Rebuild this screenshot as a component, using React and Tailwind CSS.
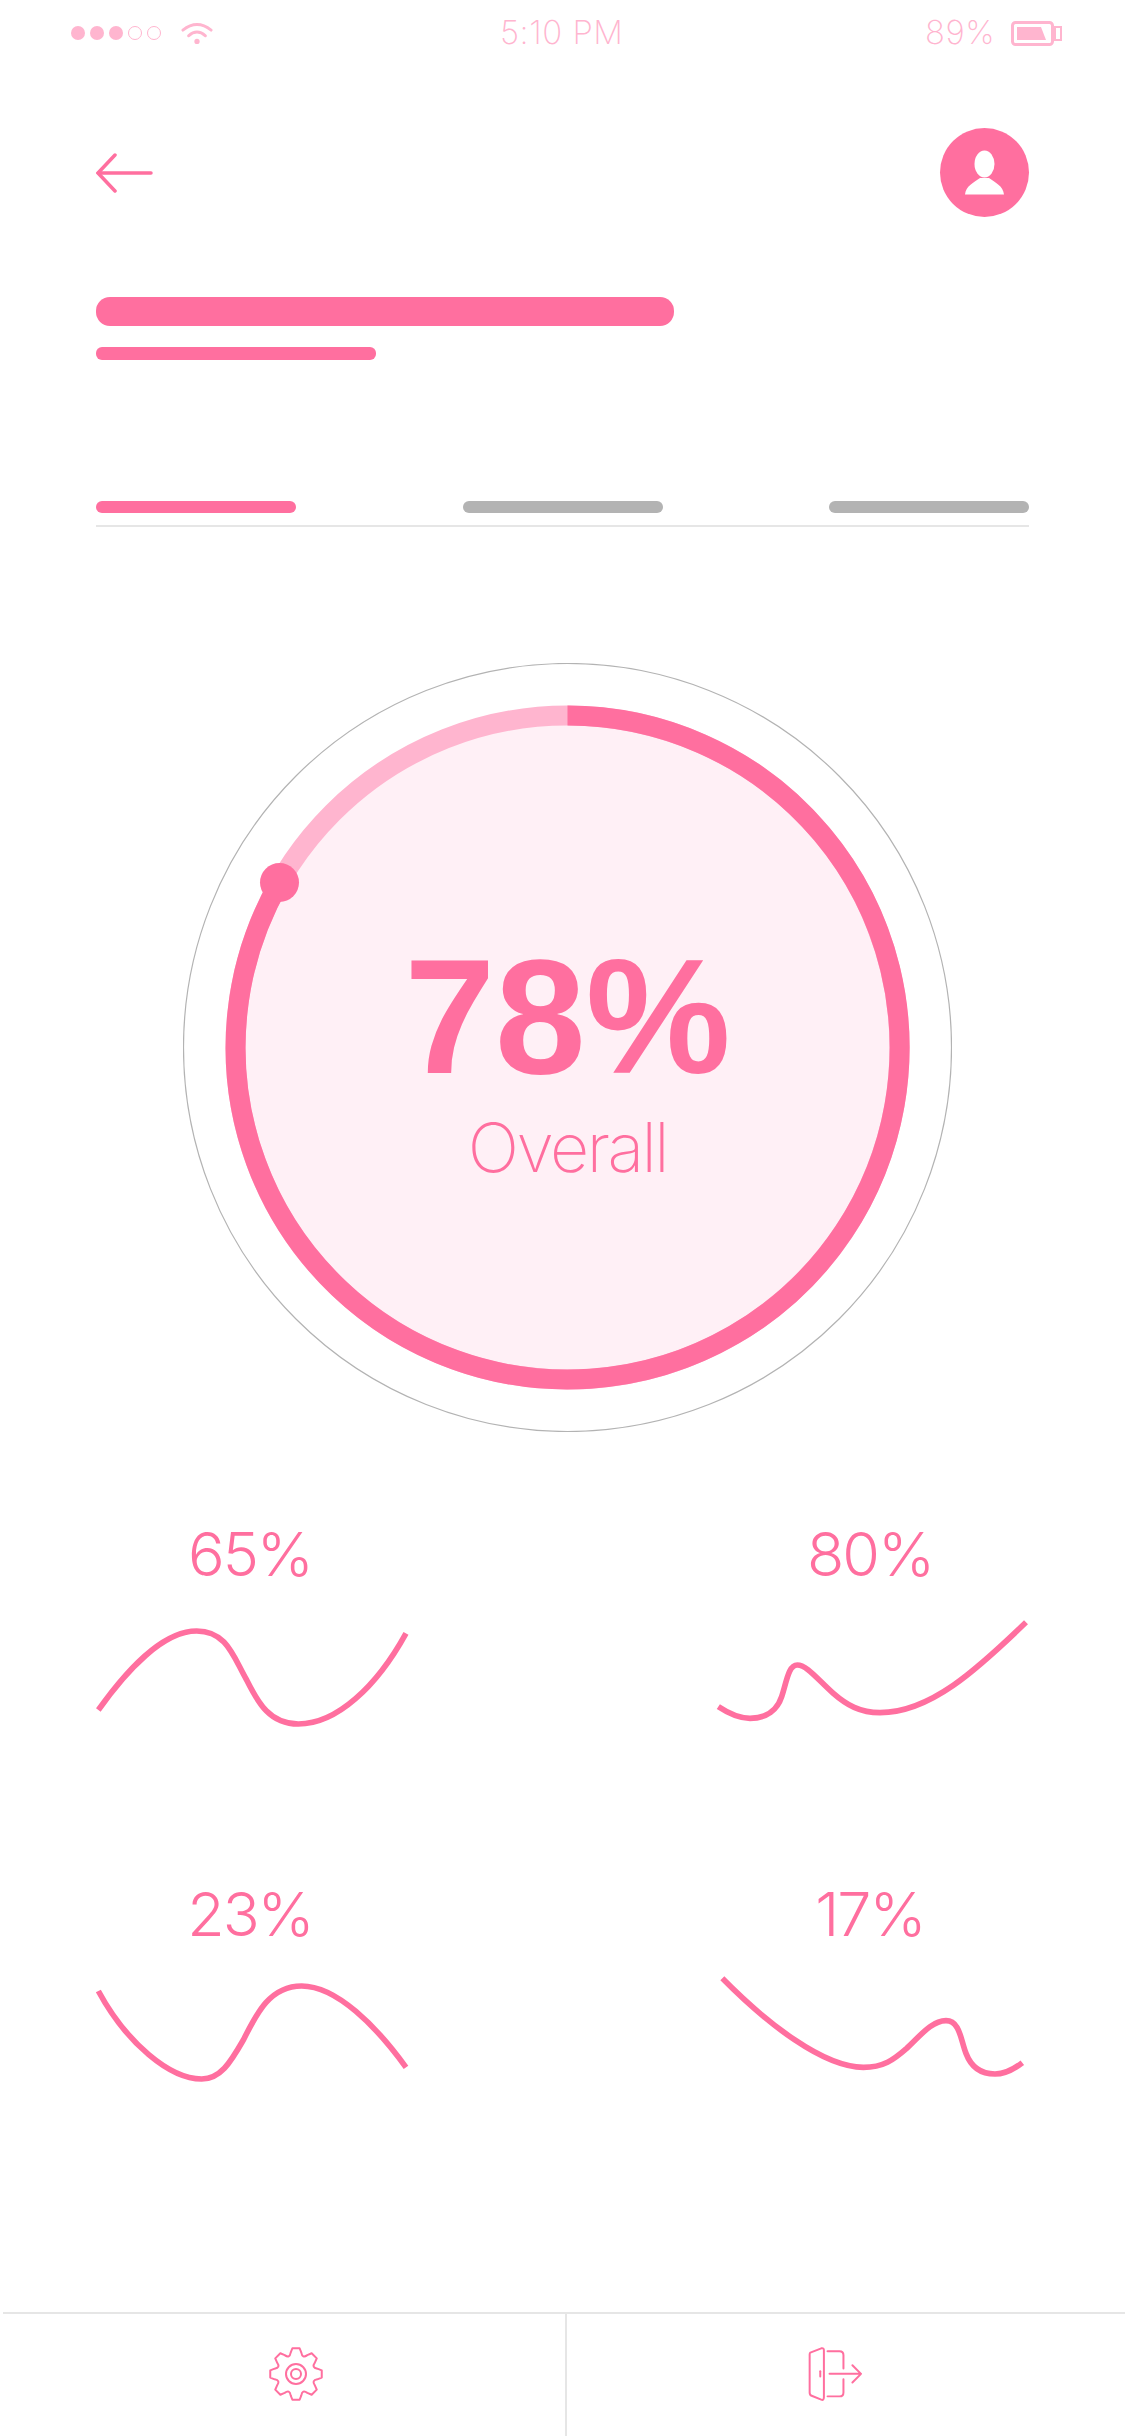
import React from "react";

const PINK = "#ff6f9f";

function gearPath() {
  const cx = 27, cy = 27, n = 8;
  const pt = (r, a) => {
    const t = (a - 90) * Math.PI / 180;
    return `${(cx + r * Math.cos(t)).toFixed(2)} ${(cy + r * Math.sin(t)).toFixed(2)}`;
  };
  let d = "";
  for (let i = 0; i < n; i++) {
    const a = (360 / n) * i;
    d += `${i === 0 ? "M" : "L"}${pt(22, a - 14)} L${pt(26, a - 8)} L${pt(26, a + 8)} L${pt(22, a + 14)} `;
    d += `Q${pt(16.5, a + 22.5)} ${pt(22, a + 31)} `;
  }
  return d + "Z";
}

function Chart({ value, d, box, h }) {
  return (
    <div className="w-[400px] flex flex-col">
      <div className="w-[360px] h-[100px] pt-[22px] text-center text-[61px] leading-[64px] font-light text-[#ff6f9f] font-['Inter',sans-serif] tracking-[-2px]">{value}</div>
      <svg viewBox={box} className="w-[400px] block" style={{ height: h }} fill="none">
        <path d={d} stroke={PINK} strokeWidth="17" />
      </svg>
    </div>
  );
}

export default function App() {
  return (
    <div className="w-[1125px] h-[2436px] bg-white flex flex-col overflow-hidden font-['Inter',sans-serif]">
      <div className="h-[66px] flex items-center pl-[71px] relative">
        <div className="flex gap-[5px] w-[110px]">
          <span className="w-[14px] h-[14px] rounded-full bg-[#ffb5cf]" />
          <span className="w-[14px] h-[14px] rounded-full bg-[#ffb5cf]" />
          <span className="w-[14px] h-[14px] rounded-full bg-[#ffb5cf]" />
          <span className="w-[14px] h-[14px] rounded-full border border-[#ffb5cf]" />
          <span className="w-[14px] h-[14px] rounded-full border border-[#ffb5cf]" />
        </div>
        <svg viewBox="0 0 34 24" className="w-[32px] h-[24px]" fill="none" stroke="#ffb5cf" strokeWidth="3" strokeLinecap="round">
          <path d="M2 9 Q17 -3 32 9" />
          <path d="M8 15 Q17 7 26 15" />
          <circle cx="17" cy="21" r="2.8" fill="#ffb5cf" stroke="none" />
        </svg>
        <span className="ml-[287px] w-[122px] text-center whitespace-nowrap text-[33px] font-extralight text-[#ffb5cf] tracking-[0.5px]">5:10 PM</span>
        <span className="ml-[303px] w-[65px] text-center text-[33px] font-extralight text-[#ffb5cf] tracking-[0.6px]">89%</span>
        <svg viewBox="0 0 51 25" className="ml-[21px] w-[51px] h-[25px]" fill="none">
          <rect x="1.5" y="1.5" width="40" height="22" rx="3" stroke="#ffb5cf" strokeWidth="3" />
          <path d="M6 6 H30 L35 19 H6 Z" fill="#ffb5cf" />
          <rect x="44" y="6" width="6" height="13" stroke="#ffb5cf" strokeWidth="2" />
        </svg>
      </div>

      <div className="mt-[62px] h-[89px] px-[96px] flex justify-between items-center">
        <svg viewBox="0 0 58 40" className="w-[58px] h-[40px]" fill="none" stroke={PINK} strokeWidth="3.5" strokeLinecap="round">
          <path d="M19 2 L2 20 L19 38" />
          <path d="M3 20 H55" />
        </svg>
        <div className="w-[89px] h-[89px] rounded-full bg-[#ff6f9f] flex items-center justify-center">
          <svg viewBox="0 0 39 45" className="w-[39px] h-[45px]" fill="white">
            <ellipse cx="19.5" cy="14" rx="10" ry="13.5" />
            <path d="M0 44.5 C1 36 8 33 15 28 H24 C31 33 38 36 39 44.5 Z" />
          </svg>
        </div>
      </div>

      <div className="mt-[80px] ml-[96px] w-[578px] h-[29px] rounded-[14px] bg-[#ff6f9f]" />
      <div className="mt-[21px] ml-[96px] w-[280px] h-[13px] rounded-[6px] bg-[#ff6f9f]" />

      <div className="mt-[141px] mx-[96px] h-[12px] flex justify-between">
        <div className="w-[200px] rounded-[6px] bg-[#ff6f9f]" />
        <div className="w-[200px] rounded-[6px] bg-[#b3b3b3]" />
        <div className="w-[200px] rounded-[6px] bg-[#b3b3b3]" />
      </div>
      <div className="mt-[12px] mx-[96px] h-[2px] bg-[#e6e6e6]" />

      <div className="mt-[136px] ml-[183px] w-[769px] h-[769px] relative">
        <svg viewBox="0 0 769 769" className="w-[769px] h-[769px] block" fill="none">
          <circle cx="384.5" cy="384.5" r="384" stroke="#b3b3b3" strokeWidth="1.2" />
          <circle cx="384.5" cy="384.5" r="325" fill="#fff0f6" />
          <circle cx="384.5" cy="384.5" r="332" stroke="#ffb5cf" strokeWidth="20" />
          <path d="M384.5 52.5 A332 332 0 1 1 96.5 219.5" stroke={PINK} strokeWidth="20" />
          <circle cx="96.5" cy="219.5" r="19.5" fill={PINK} />
        </svg>
        <div className="absolute inset-0 flex flex-col items-center pt-[274px]">
          <div className="text-[163px] leading-[160px] font-bold text-[#ff6f9f] font-['Liberation_Sans',sans-serif]">78%</div>
          <div className="mt-[12px] text-[68px] leading-[76px] font-extralight text-[#ff6f9f] tracking-[-2.5px]">Overall</div>
        </div>
      </div>

      <div className="mt-[68px] ml-[70px] flex gap-[220px]">
        <Chart value="65%" box="0 300 1200 480" h={160} d="M85 630 C170 510 280 393 380 393 C470 393 490 470 530 540 C565 610 600 672 685 672 C800 672 920 560 1008 400" />
        <Chart value="80%" box="0 300 1200 480" h={160} d="M85 620 C115 640 145 655 180 655 C230 655 262 630 275 590 C290 545 295 495 322 495 C350 495 380 535 430 580 C470 615 510 638 570 638 C720 638 860 510 1008 367" />
      </div>
      <div className="mt-[100px] ml-[70px] flex gap-[220px]">
        <Chart value="23%" box="0 300 1200 420" h={140} d="M85 393 C170 550 300 657 395 657 C450 657 480 610 520 540 C560 460 600 378 695 378 C800 378 920 500 1008 622" />
        <Chart value="17%" box="0 300 1200 420" h={140} d="M97 355 C230 490 400 622 520 622 C580 622 610 600 650 565 C690 528 725 482 768 482 C810 482 812 540 828 580 C845 625 875 642 915 642 C945 642 975 625 997 608" />
      </div>

      <div className="mt-auto h-[124px] ml-[3px] border-t-2 border-[#e6e6e6] flex">
        <div className="w-[564px] border-r-2 border-[#e6e6e6] flex items-center pl-[266px] pb-[2px]">
          <svg viewBox="0 0 54 54" className="w-[54px] h-[54px]" fill="none" stroke={PINK} strokeWidth="2">
            <path d={gearPath()} strokeLinejoin="round" />
            <circle cx="27" cy="27" r="10" />
            <circle cx="27" cy="27" r="5" />
          </svg>
        </div>
        <div className="flex-1 flex items-center pl-[239px] pb-[2px]">
          <svg viewBox="80 140 176 172" className="w-[59px] h-[57px]" fill="none" stroke={PINK} strokeWidth="6" strokeLinecap="round" strokeLinejoin="round">
            <path d="M92 160 L125 147 Q133 145 133 153 V295 Q133 305 125 302 L96 290 Q90 288 90 280 V166 Q90 161 92 160 Z" />
            <path d="M122 216 V232" />
            <path d="M144 156 H180 Q192 156 192 168 V208" />
            <path d="M192 240 V280 Q192 292 180 292 H144" />
            <path d="M150 224 H245 M219 198 L245 224 L219 250" />
          </svg>
        </div>
      </div>
    </div>
  );
}
